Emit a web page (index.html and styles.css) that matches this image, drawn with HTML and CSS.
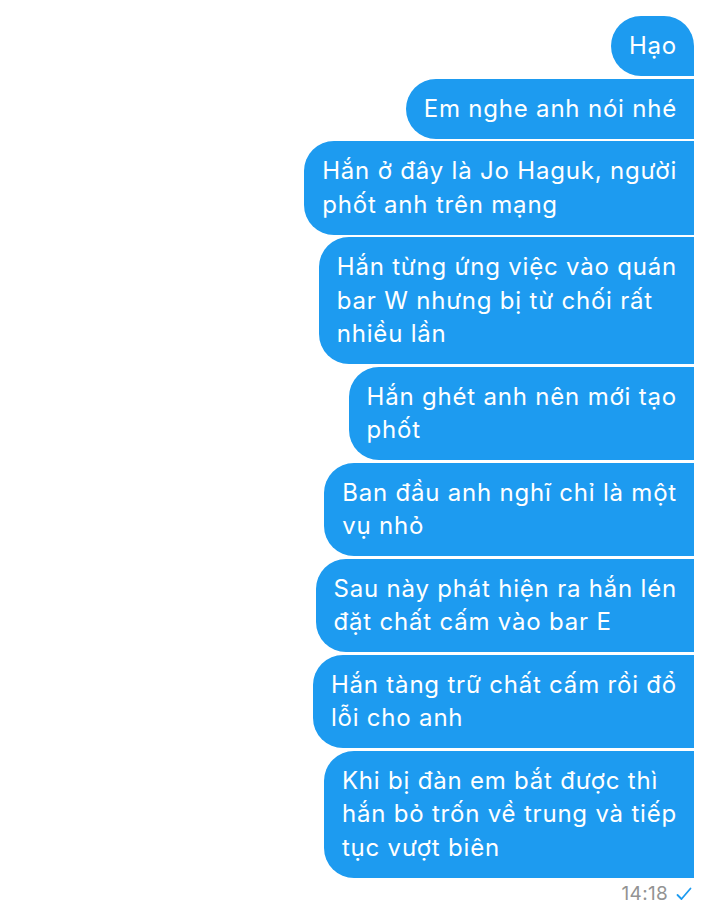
FILE: index.html
```html
<!DOCTYPE html>
<html lang="vi">
<head>
<meta charset="utf-8">
<link rel="stylesheet" href="styles.css">
</head>
<body>
<div class="chat">
  <div class="bubble first">Hạo</div>
  <div class="bubble">Em nghe anh nói nhé</div>
  <div class="bubble">Hắn ở đây là Jo Haguk, người<br>phốt anh trên mạng</div>
  <div class="bubble">Hắn từng ứng việc vào quán<br>bar W nhưng bị từ chối rất<br>nhiều lần</div>
  <div class="bubble">Hắn ghét anh nên mới tạo<br>phốt</div>
  <div class="bubble">Ban đầu anh nghĩ chỉ là một<br>vụ nhỏ</div>
  <div class="bubble">Sau này phát hiện ra hắn lén<br>đặt chất cấm vào bar E</div>
  <div class="bubble">Hắn tàng trữ chất cấm rồi đổ<br>lỗi cho anh</div>
  <div class="bubble">Khi bị đàn em bắt được thì<br>hắn bỏ trốn về trung và tiếp<br>tục vượt biên</div>
  <div class="meta">
    <span class="time">14:18</span>
    <svg class="check" width="16" height="14" viewBox="0 0 16 14"><path d="M1.5 8 L5.5 12 L14.5 1.5" fill="none" stroke="#1d9bf0" stroke-width="1.8" stroke-linecap="round" stroke-linejoin="round"/></svg>
  </div>
</div>
</body>
</html>
```
FILE: styles.css
```css
html, body {
  margin: 0;
  padding: 0;
  background: #ffffff;
}
.chat {
  display: flex;
  flex-direction: column;
  align-items: flex-end;
  gap: 2.5px;
  padding: 16px 26px 0 0;
  font-family: Inter, "Noto Sans", sans-serif;
}
.bubble {
  background: #1d9bf0;
  color: #ffffff;
  font-size: 24px;
  letter-spacing: 0.8px;
  line-height: 33.5px;
  padding: 13.25px 17px 13.25px 18px;
  border-radius: 30px 0 0 30px;
  white-space: nowrap;
}
.bubble.first {
  border-radius: 30px 30px 0 30px;
}
.meta {
  display: flex;
  align-items: center;
  gap: 8px;
  margin-top: 3px;
  margin-right: 2px;
}
.time {
  color: #939393;
  font-size: 19px;
  letter-spacing: 0.3px;
  line-height: 22px;
}
.check {
  display: block;
}
```
